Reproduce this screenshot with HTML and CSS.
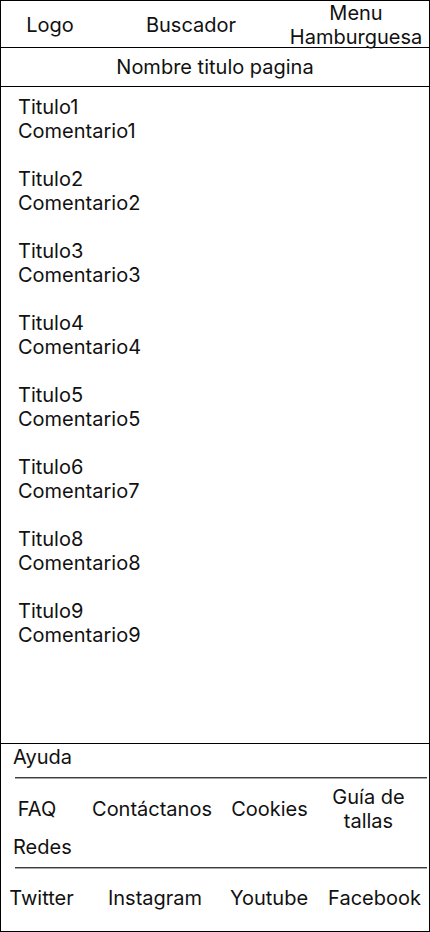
FILE: index.html
```html
<!DOCTYPE html>
<html lang="es">
<head>
<meta charset="utf-8">
<title>Nombre titulo pagina</title>
<link rel="stylesheet" href="styles.css">
</head>
<body>
<div class="page">
  <header class="header">
    <div class="h-cell">Logo</div>
    <div class="h-cell">Buscador</div>
    <div class="h-cell">Menu<br>Hamburguesa</div>
  </header>
  <div class="title-bar">Nombre titulo pagina</div>
  <main class="content">
    <div class="item"><div>Titulo1</div><div>Comentario1</div></div>
    <div class="item"><div>Titulo2</div><div>Comentario2</div></div>
    <div class="item"><div>Titulo3</div><div>Comentario3</div></div>
    <div class="item"><div>Titulo4</div><div>Comentario4</div></div>
    <div class="item"><div>Titulo5</div><div>Comentario5</div></div>
    <div class="item"><div>Titulo6</div><div>Comentario7</div></div>
    <div class="item"><div>Titulo8</div><div>Comentario8</div></div>
    <div class="item"><div>Titulo9</div><div>Comentario9</div></div>
  </main>
  <footer class="footer">
    <div class="f-head first">Ayuda</div>
    <div class="sep"></div>
    <div class="links">
      <div>FAQ</div>
      <div>Contáctanos</div>
      <div>Cookies</div>
      <div>Guía de<br>tallas</div>
    </div>
    <div class="f-head">Redes</div>
    <div class="sep"></div>
    <div class="social">
      <div>Twitter</div>
      <div>Instagram</div>
      <div>Youtube</div>
      <div class="last">Facebook</div>
    </div>
  </footer>
</div>
</body>
</html>
```
FILE: styles.css
```css
* { box-sizing: border-box; }
html, body { margin: 0; padding: 0; }
body {
  font-family: Inter, "Noto Sans", sans-serif;
  font-size: 20px;
  line-height: 24px;
  color: #111;
  background: #fff;
}
.page {
  width: 430px;
  height: 932px;
  border: 1px solid #000;
  display: flex;
  flex-direction: column;
}
.header {
  height: 47px;
  border-bottom: 1px solid #000;
  display: grid;
  grid-template-columns: 98px 184px 1fr;
  align-items: center;
  text-align: center;
  white-space: nowrap;
}
.title-bar {
  height: 39px;
  border-bottom: 1px solid #000;
  display: flex;
  align-items: center;
  justify-content: center;
}
.content {
  flex: 1;
  padding: 8px 0 0 17px;
  display: flex;
  flex-direction: column;
  gap: 24px;
}
.footer {
  border-top: 1px solid #000;
  height: 188px;
  display: flex;
  flex-direction: column;
}
.f-head {
  padding-left: 12px;
  height: 24px;
}
.f-head.first { margin-top: 1px; }
.sep {
  margin: 8px 2px 0 14px;
  height: 2px;
  border-top: 1px solid #3c3c3c;
  border-bottom: 1px solid #a8a8a8;
}
.links {
  margin-top: 3px;
  height: 53px;
  display: grid;
  grid-template-columns: 72px 158px 77px 1fr;
  align-items: center;
  text-align: center;
  white-space: nowrap;
}
.social {
  margin-top: 5px;
  height: 48px;
  display: grid;
  grid-template-columns: 81px 146px 82px 1fr;
  align-items: center;
  text-align: center;
  white-space: nowrap;
}
.social .last { padding-left: 10px; }
```
